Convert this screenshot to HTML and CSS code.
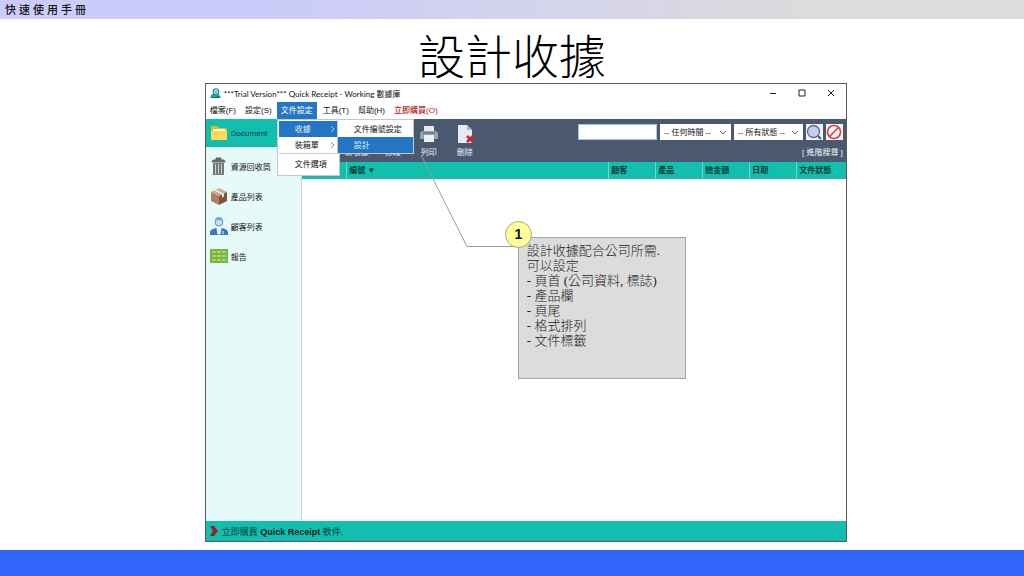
FILE: index.html
```html
<!DOCTYPE html>
<html lang="zh-Hant">
<head>
<meta charset="utf-8">
<title>快速使用手冊 - 設計收據</title>
<link rel="stylesheet" href="styles.css">
</head>
<body>
<header class="manual-bar">快速使用手冊</header>
<h1 class="slide-title">設計收據</h1>
<main class="window">
  <div class="titlebar">
    <svg class="app-icon" viewBox="0 0 12 12"><path d="M0 11h12L10 8H2z" fill="#087b80"/><path d="M1 8l3-2 3 3-1 1H1z" fill="#16a39c"/><circle cx="6.500" cy="4" r="3" fill="#d8f7f3" stroke="#159b91" stroke-width="1.400"/><path d="M5 4h3M8 6l2 2" stroke="#0a7d80"/></svg>
    <span class="app-name">***Trial Version*** Quick Receipt - Working 數據庫</span>
    <div class="window-buttons">
      <button aria-label="最小化"><svg viewBox="0 0 8 8"><path d="M1 4.500h6"/></svg></button>
      <button aria-label="最大化"><svg viewBox="0 0 8 8"><path d="M1 1h6v6H1z"/></svg></button>
      <button aria-label="關閉"><svg viewBox="0 0 8 8"><path d="M1 1l6 6M7 1L1 7"/></svg></button>
    </div>
  </div>
  <nav class="menubar">
    <button class="menu">檔案(F)</button>
    <button class="menu">設定(S)</button>
    <div class="menu-group">
      <button class="menu menu-open">文件設定</button>
      <div class="dropdown">
        <button class="item item-active">收據<svg class="arrow" viewBox="0 0 5 8"><path d="M1 1l3 3-3 3"/></svg></button>
        <button class="item">装箱單<svg class="arrow" viewBox="0 0 5 8"><path d="M1 1l3 3-3 3"/></svg></button>
        <button class="item item-last">文件選項</button>
        <div class="submenu">
          <button class="item">文件編號設定</button>
          <button class="item item-active">設計</button>
        </div>
      </div>
    </div>
    <button class="menu">工具(T)</button>
    <button class="menu">幫助(H)</button>
    <button class="menu menu-buy">立即購買(O)</button>
  </nav>
  <div class="workspace">
    <aside class="sidebar">
      <button class="side side-current"><svg viewBox="0 0 18 18"><path d="M1 3q0-1 1-1h5l2 2h7q1 0 1 1v9H1z" fill="#e9b52c"/><path d="M3 5h12v4H3z" fill="#fff5c8"/><path d="M1 7h16v8q0 1-1 1H2q-1 0-1-1z" fill="#ffd95a"/></svg>Document</button>
      <button class="side"><svg viewBox="0 0 18 18"><path d="M6 3V1h5v2M3 3h11l1 2H2z" fill="#666" stroke="#666"/><path d="M3 6h11v12H3z" fill="#777"/><path d="M5.500 7v10M8.500 7v10M11.500 7v10" stroke="#c8d2d0" stroke-width="1"/></svg>資源回收筒</button>
      <button class="side"><svg viewBox="0 0 18 18"><path d="M9 1l8 4-8 4-8-4z" fill="#c7ab95"/><path d="M1 5l8 4v9l-8-4z" fill="#ad805f"/><path d="M17 5L9 9v9l8-4z" fill="#7d563e"/><path d="M4 3.500l8 4v3l2-1v-3L6 2.500z" fill="#efe7df"/></svg>產品列表</button>
      <button class="side"><svg viewBox="0 0 18 18"><path d="M0 18v-3q0-2 3-3l3-1 3 3 3-3 3 1q3 1 3 3v3z" fill="#3978c4"/><circle cx="9" cy="5" r="4" fill="#c5dcf4" stroke="#5d94d5"/><path d="M5 4q0-4 4-4t4 4q-4-2-8 0z" fill="#75a7df"/><path d="M7 12l2 2 2-2-1 5H8zM13 14v3" fill="#e8f4ff" stroke="#e8f4ff"/></svg>顧客列表</button>
      <button class="side"><svg viewBox="0 0 18 18"><path d="M0 2h18v14H0z" fill="#76b83e"/><path d="M2 5h4M7 5h4M12 5h4M2 9h4M7 9h4M12 9h4M2 13h4M7 13h4M12 13h4" stroke="#b2dd84" stroke-width="1.500"/></svg>報告</button>
    </aside>
    <section class="content">
      <div class="toolbar">
        <div class="tools">
          <button class="tool"><svg viewBox="0 0 20 20"><path d="M3 1h14v18H3z" fill="#e5ebef"/></svg>新收據</button>
          <button class="tool"><svg viewBox="0 0 20 20"><path d="M3 1h14v18H3z" fill="#e5ebef"/></svg>修改</button>
          <button class="tool"><svg viewBox="0 0 20 20"><path d="M5 2h10v5H5z" fill="#e4eaed"/><path d="M3 7h14l2 2v6H1V9z" fill="#91a5ab"/><path d="M4 9h12" stroke="#53656d"/><path d="M5 11h10v7H5z" fill="#e9eff1"/></svg>列印</button>
          <button class="tool"><svg viewBox="0 0 20 20"><path d="M3 1h9l5 5v13H3z" fill="#e5ebee"/><path d="M12 1l5 5h-5z" fill="#a8b8bf"/><path d="M12 12l6 6M18 12l-6 6" stroke="#cc2229" stroke-width="2.600"/></svg>刪除</button>
        </div>
        <form class="search">
          <div class="search-row">
            <input class="query" type="text" aria-label="搜尋">
            <span class="picker"><select aria-label="時間"><option>-- 任何時間 --</option></select><svg viewBox="0 0 8 6"><path d="M1 1l3 3 3-3"/></svg></span>
            <span class="picker"><select aria-label="狀態"><option>-- 所有狀態 --</option></select><svg viewBox="0 0 8 6"><path d="M1 1l3 3 3-3"/></svg></span>
            <button class="square" type="button" aria-label="搜尋"><svg viewBox="0 0 16 16"><path d="M11 11l4 4" stroke="#4d5963" stroke-width="2"/><circle cx="7.500" cy="7.500" r="6" fill="#c3cdf5" stroke="#5d6b80" stroke-width="1.300"/></svg></button>
            <button class="square" type="button" aria-label="清除"><svg viewBox="0 0 16 16"><circle cx="8" cy="8" r="6.500" fill="#fff" stroke="#dc3c3c" stroke-width="1.700"/><path d="M3.500 12.500l9-9" stroke="#dc3c3c" stroke-width="1.700"/></svg></button>
          </div>
          <a class="advanced" href="#">[ 進階搜尋 ]</a>
        </form>
      </div>
      <table class="records">
        <thead><tr><th class="col-mark"></th><th>編號 ▼</th><th class="col">顧客</th><th class="col">產品</th><th class="col">總金額</th><th class="col">日期</th><th class="col col-state">文件狀態</th></tr></thead>
      </table>
    </section>
  </div>
  <footer class="status"><svg viewBox="0 0 8 10"><path d="M0 0h4l4 5-4 5H0l3-5z" fill="#9b1c28"/></svg><a href="#">立即購買 <b>Quick Receipt</b> 軟件.</a></footer>
  <div class="callout">
    <svg class="leader" viewBox="0 0 98 92"><path d="M0 0l46 91.500h52"/></svg>
    <span class="badge">1</span>
    <div class="note">
      <p>設計收據配合公司所需.</p>
      <p>可以設定</p>
      <p>- 頁首 (公司資料, 標誌)</p>
      <p>- 產品欄</p>
      <p>- 頁尾</p>
      <p>- 格式排列</p>
      <p>- 文件標籤</p>
    </div>
  </div>
</main>
<div class="bottom-bar"></div>
</body>
</html>
```
FILE: styles.css
```css
* { box-sizing: border-box; }
body {
  margin: 0;
  min-height: 100vh;
  display: flex;
  flex-direction: column;
  background: #fff;
  font-family: "Liberation Sans", "Noto Sans CJK TC", sans-serif;
  font-size: 8px;
  color: #111;
}
button, input, select {
  margin: 0;
  padding: 0;
  border: 0;
  border-radius: 0;
  background: none;
  font: inherit;
  color: inherit;
}
svg { display: block; flex: none; fill: none; }
.manual-bar {
  height: 19px;
  padding-left: 5px;
  background: linear-gradient(90deg, #ccccfd 0%, #ccccf9 30%, #dcdcdc 80%);
  font-size: 11px;
  font-weight: 500;
  line-height: 20px;
  letter-spacing: 3px;
}
.slide-title {
  margin: 0;
  height: 64px;
  font-family: "Liberation Serif", "Noto Sans CJK TC", serif;
  font-size: 47px;
  font-weight: 300;
  line-height: 79px;
  text-align: center;
  color: #000;
}
.window {
  position: relative;
  flex: 1;
  display: flex;
  flex-direction: column;
  width: 62.7%;
  margin: 0 auto 8px 20%;
  border: 1px solid #5a5a5a;
}
.titlebar {
  display: flex;
  align-items: center;
  height: 18px;
  padding: 0 3px 0 4px;
  font-family: Lato, "Noto Sans CJK TC", sans-serif;
}
.app-icon { width: 11px; height: 11px; margin-right: 3px; }
.window-buttons { display: flex; gap: 5px; margin-left: auto; }
.window-buttons button { width: 24px; display: flex; justify-content: center; }
.window-buttons svg { width: 8px; height: 8px; stroke: #222; }
.menubar { display: flex; gap: 1px; height: 17px; }
.menu { height: 17px; padding: 0 4px; line-height: 17px; white-space: nowrap; }
.menu-group { position: relative; margin-right: 1px; }
.menu-open { background: #2577c4; color: #fff; }
.menu-buy { color: #b51218; font-weight: 500; }
.dropdown {
  position: absolute;
  z-index: 3;
  top: 17px;
  left: 0;
  width: 63px;
  padding: 1px;
  background: #fff;
  border: 1px solid #c4c8cc;
}
.item {
  position: relative;
  display: block;
  width: 100%;
  height: 16px;
  padding-left: 16px;
  line-height: 15px;
  text-align: left;
  white-space: nowrap;
}
.item-active { background: #2475c3; color: #dcecff; }
.item-last { height: 21px; line-height: 21px; border-top: 1px solid #ccc; }
.arrow { position: absolute; right: 3px; top: 4px; width: 5px; height: 8px; stroke: #888; }
.item-active .arrow { stroke: #a8d0ff; }
.submenu {
  position: absolute;
  top: -1px;
  left: 59px;
  width: 77px;
  padding: 1px 0 0;
  background: #fff;
  border: 1px solid #c4c8cc;
}
.workspace { flex: 1; display: flex; }
.sidebar {
  width: 96px;
  background: #e6fbf9;
  border-right: 1px solid #c9d5d5;
}
.side {
  display: flex;
  align-items: center;
  gap: 3px;
  width: 100%;
  height: 30px;
  padding-left: 4px;
}
.side svg { width: 18px; height: 18px; }
.side-current {
  width: 96px;
  height: 28px;
  margin-bottom: 4px;
  background: #12beae;
  color: #07403f;
}
.content { flex: 1; min-width: 0; }
.toolbar {
  display: flex;
  justify-content: space-between;
  height: 43px;
  background: #4b5970;
  color: #f3f5f8;
}
.tools { display: flex; padding: 5px 0 0 37px; }
.tool {
  display: flex;
  flex-direction: column;
  align-items: center;
  gap: 3px;
  width: 36px;
  height: 35px;
  line-height: 12px;
}
.tool svg { width: 20px; height: 20px; }
.search {
  display: flex;
  flex-direction: column;
  align-items: flex-end;
  gap: 7px;
  padding: 5px 3px 0 0;
}
.search-row { display: flex; gap: 3px; }
.query { width: 79px; height: 16px; background: #fff; border: 1px solid #a9c9e8; }
.picker { position: relative; width: 71px; background: #fff; color: #111; }
.picker + .picker { width: 69px; }
.picker select { width: 100%; height: 16px; padding-left: 4px; appearance: none; }
.picker svg { position: absolute; right: 4px; top: 6px; width: 8px; height: 6px; stroke: #666; pointer-events: none; }
.square { width: 17px; height: 16px; background: #f5f5f8; }
.square svg { width: 16px; height: 16px; }
.advanced { color: #f3f5f8; line-height: 12px; text-decoration: none; }
.records { width: 100%; table-layout: fixed; border-collapse: collapse; }
.records th {
  height: 17px;
  padding: 0 0 0 2px;
  background: #12beae;
  border-left: 1px solid #69d8cd;
  color: #073c38;
  font-weight: 700;
  line-height: 16px;
  text-align: left;
}
.records .col-mark { width: 45px; border-left: 0; }
.records .col { width: 47px; }
.records .col-state { width: 49px; }
.status {
  display: flex;
  align-items: center;
  gap: 4px;
  height: 20px;
  padding-left: 4px;
  background: #12beae;
  font-size: 9px;
}
.status svg { width: 8px; height: 10px; }
.status a { color: #07403f; text-decoration: none; }
.status b { color: #03211f; }
.callout { position: absolute; top: 153px; left: 312px; z-index: 4; }
.note {
  width: 168px;
  height: 142px;
  padding: 5px 8px;
  background: #dcdcdc;
  border: 1px solid #a5a5a5;
  font-family: "Liberation Serif", "Noto Sans CJK TC", serif;
  font-size: 13px;
  font-weight: 300;
  line-height: 15px;
  color: #222;
  white-space: nowrap;
}
.note p { margin: 0; }
.leader { position: absolute; top: -82px; left: -97px; width: 98px; height: 92px; stroke: #9a9a9a; }
.badge {
  position: absolute;
  top: -16px;
  left: -13px;
  width: 27px;
  height: 27px;
  border: 1px solid #aaa67a;
  border-radius: 50%;
  background: #ffff99;
  font-size: 14px;
  font-weight: 700;
  line-height: 25px;
  text-align: center;
}
.bottom-bar { height: 26px; background: #3366ff; }
```
